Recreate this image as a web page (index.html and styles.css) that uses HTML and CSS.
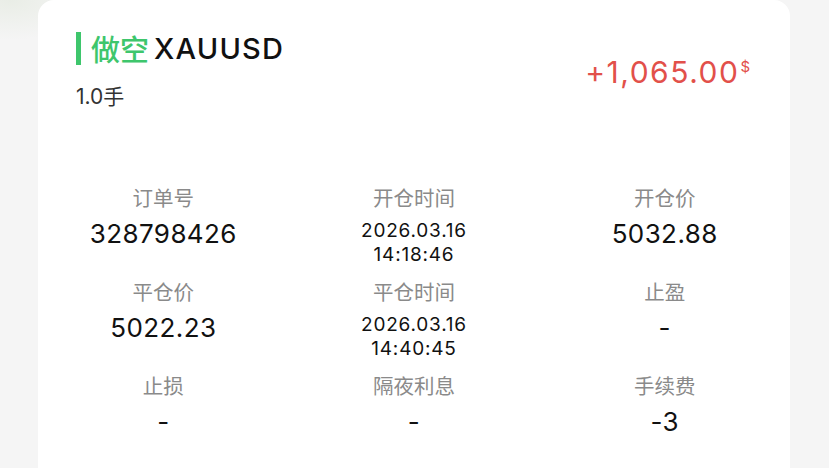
FILE: index.html
```html
<!DOCTYPE html>
<html lang="zh-CN">
<head>
<meta charset="utf-8">
<title>订单详情</title>
<link rel="stylesheet" href="styles.css">
</head>
<body>
<div class="page">
  <section class="card">
    <header class="head">
      <div class="head-left">
        <div class="title">
          <span class="bar"></span>
          <span class="side">做空</span>
          <span class="symbol">XAUUSD</span>
        </div>
        <div class="lots">1.0手</div>
      </div>
      <div class="profit">+1,065.00<span class="cur">$</span></div>
    </header>
    <div class="grid">
      <div class="cell"><div class="label">订单号</div><div class="value">328798426</div></div>
      <div class="cell"><div class="label">开仓时间</div><div class="value small">2026.03.16<br>14:18:46</div></div>
      <div class="cell"><div class="label">开仓价</div><div class="value">5032.88</div></div>
      <div class="cell"><div class="label">平仓价</div><div class="value">5022.23</div></div>
      <div class="cell"><div class="label">平仓时间</div><div class="value small">2026.03.16<br>14:40:45</div></div>
      <div class="cell"><div class="label">止盈</div><div class="value">-</div></div>
      <div class="cell"><div class="label">止损</div><div class="value">-</div></div>
      <div class="cell"><div class="label">隔夜利息</div><div class="value">-</div></div>
      <div class="cell"><div class="label">手续费</div><div class="value">-3</div></div>
    </div>
  </section>
</div>
</body>
</html>
```

FILE: styles.css
```css
html, body {
  margin: 0;
  padding: 0;
  height: 468px;
  overflow: hidden;
}
body {
  background: #f5f5f5;
  font-family: Inter, "Noto Sans CJK SC", sans-serif;
  color: #111;
}
.page {
  height: 468px;
  padding-left: 38px;
  background: radial-gradient(ellipse 80px 40px at 10px 0, #e9ede6 0%, rgba(245,245,245,0) 100%);
}
.card {
  width: 752px;
  height: 468px;
  background: #fff;
  border-radius: 16px 16px 0 0;
}
.head {
  display: flex;
  justify-content: space-between;
  align-items: flex-start;
  padding: 28px 40px 0 38px;
}
.title {
  display: flex;
  align-items: center;
  height: 40px;
  font-size: 29px;
  font-weight: 500;
}
.bar {
  width: 5px;
  height: 33px;
  background: #3ec66c;
  margin-right: 10px;
  margin-top: 1px;
}
.side {
  color: #3ec66c;
  font-family: "Noto Sans CJK SC", sans-serif;
  font-weight: 500;
  margin-right: 5px;
}
.symbol {
  color: #111;
  font-weight: 500;
  letter-spacing: 1.2px;
}
.lots {
  margin-top: 15px;
  font-size: 21px;
  line-height: 28px;
  color: #333;
}
.profit {
  margin-top: 28px;
  font-size: 30px;
  line-height: 32px;
  color: #e2504a;
  letter-spacing: 1.5px;
}
.cur {
  font-size: 15px;
  vertical-align: top;
  line-height: 22px;
  margin-left: 1px;
  letter-spacing: 0;
}
.grid {
  display: grid;
  grid-template-columns: repeat(3, 1fr);
  row-gap: 12px;
  margin-top: 74px;
  text-align: center;
}
.label {
  font-size: 20.5px;
  line-height: 24px;
  color: #8a8a8a;
  font-family: "Noto Sans CJK SC", sans-serif;
}
.value {
  margin-top: 10px;
  font-size: 26px;
  line-height: 30px;
  color: #111;
  letter-spacing: 0.4px;
}
.value.small {
  font-size: 19px;
  line-height: 24px;
  letter-spacing: 0.8px;
}
```
